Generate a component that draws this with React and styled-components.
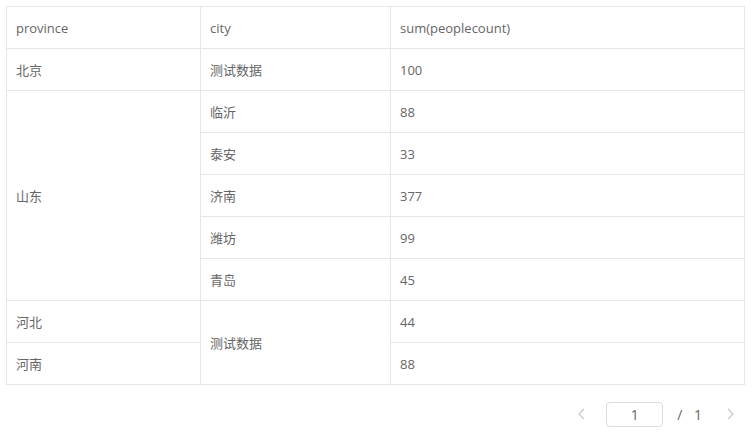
import React from "react";
import styled, { createGlobalStyle } from "styled-components";

const Global = createGlobalStyle`
  body { margin: 0; background: #fff; font-family: "Open Sans", "Noto Sans CJK SC", sans-serif; }
`;

const Wrap = styled.div`
  padding: 6px 7px 0 6px;
  width: 752px;
  box-sizing: border-box;
`;

const Table = styled.table`
  border-collapse: collapse;
  width: 739px;
  table-layout: fixed;
  font-size: 13px;
  color: #666;
`;

const Cell = styled.td`
  border: 1px solid #e6e6e6;
  height: 42px;
  padding: 0 0 0 9px;
  box-sizing: border-box;
  vertical-align: middle;
  text-align: left;
  font-weight: normal;
  white-space: nowrap;
`;

const Pager = styled.div`
  display: flex;
  align-items: center;
  justify-content: flex-end;
  height: 32px;
  margin-top: 13px;
  padding-right: 3px;
  font-size: 14px;
  color: #666;
`;

const Arrow = styled.span`
  display: flex;
  width: 24px;
  justify-content: center;
  color: #c0c4cc;
`;

const PageInput = styled.div`
  width: 57px;
  height: 25px;
  box-sizing: border-box;
  border: 1px solid #dcdcdc;
  border-radius: 4px;
  display: flex;
  align-items: center;
  justify-content: center;
  margin: 0 14px 0 12px;
  font-size: 14px;
  color: #666;
`;

const Total = styled.span`
  margin-right: 16px;
  word-spacing: 8px;
`;

const Chevron = ({ dir }) => (
  <svg width="10" height="12" viewBox="0 0 10 12" fill="none" stroke="#c8c8c8" strokeWidth="1.2">
    {dir === "left" ? <path d="M7 1 L2 6 L7 11" /> : <path d="M3 1 L8 6 L3 11" />}
  </svg>
);

export default function App() {
  return (
    <Wrap>
      <Global />
      <Table>
        <colgroup>
          <col style={{ width: 194 }} />
          <col style={{ width: 190 }} />
          <col />
        </colgroup>
        <tbody>
          <tr>
            <Cell as="th">province</Cell>
            <Cell as="th">city</Cell>
            <Cell as="th">sum(peoplecount)</Cell>
          </tr>
          <tr>
            <Cell>北京</Cell>
            <Cell>测试数据</Cell>
            <Cell>100</Cell>
          </tr>
          <tr>
            <Cell rowSpan={5}>山东</Cell>
            <Cell>临沂</Cell>
            <Cell>88</Cell>
          </tr>
          <tr>
            <Cell>泰安</Cell>
            <Cell>33</Cell>
          </tr>
          <tr>
            <Cell>济南</Cell>
            <Cell>377</Cell>
          </tr>
          <tr>
            <Cell>潍坊</Cell>
            <Cell>99</Cell>
          </tr>
          <tr>
            <Cell>青岛</Cell>
            <Cell>45</Cell>
          </tr>
          <tr>
            <Cell>河北</Cell>
            <Cell rowSpan={2}>测试数据</Cell>
            <Cell>44</Cell>
          </tr>
          <tr>
            <Cell>河南</Cell>
            <Cell>88</Cell>
          </tr>
        </tbody>
      </Table>
      <Pager>
        <Arrow><Chevron dir="left" /></Arrow>
        <PageInput>1</PageInput>
        <Total>/ 1</Total>
        <Arrow><Chevron dir="right" /></Arrow>
      </Pager>
    </Wrap>
  );
}
